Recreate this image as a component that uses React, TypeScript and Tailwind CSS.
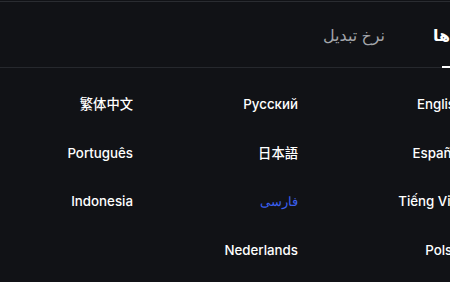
import React from 'react';

const languages = [
    'English', 'Русский', '繁体中文',
    'Español', '日本語', 'Português',
    'Tiếng Việt', 'فارسی', 'Indonesia',
    'Polski', 'Nederlands',
];

export default function App() {
    const active = 'فارسی';

    return (
        <div className="w-[450px] h-[282px] overflow-hidden bg-[#111216]" style={{ fontFamily: 'Inter, "Noto Sans", "Noto Sans CJK SC", sans-serif' }}>
            <div className="border-t border-[#2a2c31] mt-px" />
            <div dir="rtl" className="w-[520px]">
                {/* Tabs */}
                <div className="h-[66px] border-b border-[#26282d] flex items-end gap-12 pr-[35px]">
                    <button className="relative h-full flex items-center text-[16px] font-bold text-white" style={{ fontFamily: '"Noto Sans", "DejaVu Sans", sans-serif' }}>
                        زبان‌ها
                        <span className="absolute -bottom-px right-[15px] w-[28px] h-[2px] bg-white" />
                    </button>
                    <button className="h-full flex items-center text-[16px] text-[#a3a5ab]" style={{ fontFamily: '"Noto Sans", "DejaVu Sans", sans-serif' }}>
                        نرخ تبدیل
                    </button>
                </div>

                {/* Language grid */}
                <div className="pr-[57px] pt-[26px] grid grid-cols-[repeat(3,133px)] gap-x-8 gap-y-[28.5px]">
                    {languages.map((lang) => (
                        <button
                            key={lang}
                            className={`h-[20px] text-[13.3px] font-medium leading-5 text-start ${lang === active ? 'text-[#3a5ff0]' : 'text-white'}`}
                        >
                            {lang}
                        </button>
                    ))}
                </div>
            </div>
        </div>
    );
}
